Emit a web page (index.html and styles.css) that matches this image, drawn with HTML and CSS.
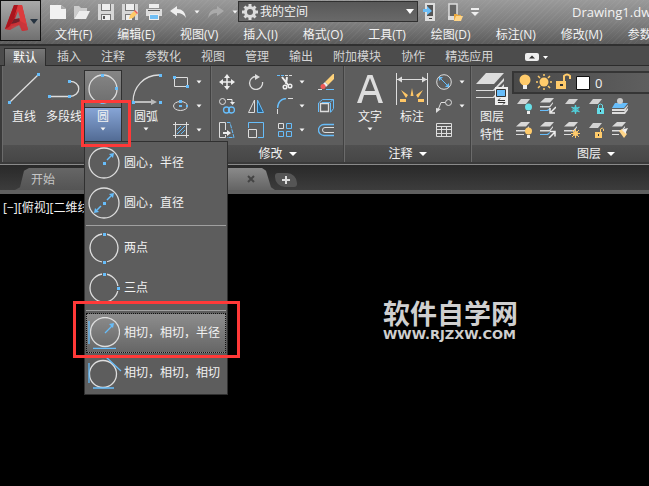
FILE: index.html
```html
<!DOCTYPE html>
<html lang="zh-CN">
<head>
<meta charset="utf-8">
<title>Drawing1.dwg</title>
<link rel="stylesheet" href="styles.css">
</head>
<body>
<svg width="0" height="0" class="defs" aria-hidden="true">
  <defs>
    <symbol id="down" viewBox="0 0 6 4"><path d="M0.5 0.5h5L3 3.5z" fill="#f4f4f4"/></symbol>
    <symbol id="sheet" viewBox="0 0 16 16"><path d="M5 1h9L10 6H1z" fill="#d2d2d2"/></symbol>
    <symbol id="sheets" viewBox="0 0 16 16"><path d="M5 0h9L10 4.500H0z" fill="#d8d8d8"/><path d="M0 8h9.500L13 4v1.500L10 9.500H0z" fill="#ddd"/></symbol>
  </defs>
</svg>

<header class="header">
  <button class="app" aria-label="应用程序菜单">
    <svg width="38" height="38" viewBox="0 0 38 38">
      <path d="M4 27 13 3h8l6 25-6 1-2-6-8 1-2 4z" fill="#d22a30"/>
      <path d="M13 3h4l-3 12-7 12-3 0z" fill="#a9151d"/>
      <path d="M17 3h4l6 25-6-3-5-16-3 7z" fill="#dc3b3c"/>
      <path d="m13 17 5-1 1 4-9 2z" fill="#75202a"/>
      <path d="m17 9 2 7-5 1z" fill="#888"/>
      <path d="m4 27 15-8 6 3 2 6-6 1-3-6-9 5z" fill="#c7363b" opacity=".85"/>
      <path d="M29 17h8l-4 5z" fill="#263340"/>
    </svg>
  </button>
  <div class="header-rows">
    <div class="quick">
      <div class="tools">
        <button aria-label="新建"><svg width="16" height="16"><path d="M0 1h11l5 4v10H0z" fill="#f1f1f1"/><path d="M11 1v4h5z" fill="#aaa"/></svg></button>
        <button aria-label="打开"><svg width="16" height="16"><path d="M0 15V2h5l2 2h6v3H5z" fill="#ccc"/><path d="M5 7h11l-4 8H0z" fill="#ededed"/></svg></button>
        <button aria-label="保存"><svg width="16" height="16"><path d="M0 0h16v16H0z" fill="#d7d7d7"/><path d="M3 0h10v7H3zM3 10h10v6H3z" fill="#777"/><path d="M4 0h8v6H4zM4 11h8v5H4z" fill="#eee"/><path d="M5 12h2v3H5z" fill="#555"/></svg></button>
        <button aria-label="另存为"><svg width="16" height="16"><path d="M0 0h16v16H0z" fill="#d7d7d7"/><path d="M3 0h10v7H3zM3 10h10v6H3z" fill="#777"/><path d="M4 0h8v6H4zM4 11h6v5H4z" fill="#eee"/><path d="m7 15 1-4 4-4 3 3-4 4z" fill="#ffca66"/><path d="m12 7 1-1 3 3-1 1z" fill="#f05b55"/></svg></button>
        <button aria-label="打印"><svg width="16" height="16"><path d="M3 0h10v4H3z" fill="#eee"/><path d="M0 5h16v7H0z" fill="#ddd"/><path d="M2 6h12v1H2z" fill="#555"/><path d="M3 10h10v6H3z" fill="#eee"/><path d="M4 11h8v4H4z" fill="#70bff5"/></svg></button>
        <button aria-label="放弃"><svg width="16" height="16"><path d="M0 7 7 2v3q8 0 9 9-3-5-9-5v3z" fill="#eee"/></svg></button>
        <button class="mini" aria-label="放弃选项"><svg width="6" height="4"><use href="#down"/></svg></button>
        <button aria-label="重做"><svg width="16" height="16"><path d="M16 7 9 2v3Q1 5 0 14q3-5 9-5v3z" fill="#aaa"/></svg></button>
        <button class="mini" aria-label="重做选项"><svg width="6" height="4"><use href="#down"/></svg></button>
      </div>
      <div class="workspace">
        <svg width="16" height="16" viewBox="-8 -8 16 16"><circle r="4.500" fill="none" stroke="#ddd" stroke-width="3"/><path d="M0-8v3M0 8V5M-8 0h3M8 0H5M-5.500-5.500l2 2M5.500 5.500l-2-2M5.500-5.500l-2 2M-5.500 5.500l2-2" stroke="#ddd" stroke-width="3"/></svg>
        <select aria-label="工作空间"><option>我的空间</option></select>
        <svg width="8" height="5" viewBox="0 0 8 5"><path d="M0 0h8L4 5z" fill="#fff"/></svg>
      </div>
      <div class="tools mobile">
        <button aria-label="保存到移动设备"><svg width="16" height="18"><path d="M3 1h8v16H3z" fill="#555" stroke="#ddd" stroke-width="2"/><path d="M2 13h10v5H2z" fill="#ddd"/><path d="M6 15h3v1H6z" fill="#444"/><path d="M0 6h4V3l5 5-5 4v-3H0z" fill="#69bdf8"/></svg></button>
        <button aria-label="从移动设备打开"><svg width="16" height="18"><path d="M2 1h8v15H2z" fill="#666" stroke="#ddd" stroke-width="1.500"/><path d="M1 13h9v4H1z" fill="#ddd"/><path d="M7 18v-7h3l1 1h3v6z" fill="#e9a83f"/><path d="M9 13h7l-2 5H7z" fill="#ffd588"/></svg></button>
        <button class="mini custom" aria-label="自定义"><svg width="8" height="8"><path d="M0 0h8v2H0zM0 4h8L4 8z" fill="#eee"/></svg></button>
      </div>
      <span class="doc-title">Drawing1.dwg</span>
    </div>
    <nav class="menubar">
      <a href="#">文件(F)</a><a href="#">编辑(E)</a><a href="#">视图(V)</a><a href="#">插入(I)</a><a href="#">格式(O)</a><a href="#">工具(T)</a><a href="#">绘图(D)</a><a href="#">标注(N)</a><a href="#">修改(M)</a><a href="#">参数(P)</a>
    </nav>
  </div>
</header>

<nav class="tabs">
  <button class="on">默认</button><button>插入</button><button>注释</button><button>参数化</button><button>视图</button><button>管理</button><button>输出</button><button>附加模块</button><button>协作</button><button>精选应用</button>
  <button class="collapse" aria-label="最小化功能区"><svg width="26" height="8"><rect width="14" height="8" rx="2" fill="#eee"/><path d="M4 5.500h6L7 2.500z" fill="#333"/><path d="M18 3h5l-2.500 3z" fill="#fff"/></svg></button>
</nav>

<main class="ribbon">
  <section class="panel">
    <div class="panel-body draw">
      <button class="big line"><svg width="32" height="32"><path d="m2 29 28-27" stroke="#ddd" stroke-width="1.300"/><path d="M0 28h3v3H0zM29 0h3v3h-3z" fill="#67bdfa"/></svg><span>直线</span></button>
      <button class="big poly"><svg width="32" height="32"><path d="M1 23.500h20M21 8.500c13-1 13 15 0 15" fill="none" stroke="#ddd" stroke-width="1.300"/><path d="M0 22h3v3H0zM20 22h3v3h-3zM20 7h3v3h-3z" fill="#67bdfa"/></svg><span>多段线</span></button>
      <div class="circle">
        <button class="circle-top" aria-label="绘制圆"><svg width="32" height="32"><circle cx="16" cy="16" r="14" fill="none" stroke="#ddd" stroke-width="1.300"/><path d="M14 1h3v3h-3zM14 28h3v3h-3zM28 14h3v3h-3z" fill="#67bdfa"/></svg></button>
        <button class="circle-more"><span>圆</span><svg width="6" height="4"><use href="#down"/></svg></button>
        <i class="mark"></i>
        <div class="menu">
          <button><svg width="32" height="32"><circle cx="16" cy="16" r="15" fill="none" stroke="#ddd" stroke-width="1.300"/><path d="M15 15h3v3h-3z" fill="#67bdfa"/><path d="m19 13 4-4" stroke="#67bdfa" stroke-width="1.500"/><path d="m21 7 5-1-1 5z" fill="#67bdfa"/></svg>圆心，半径</button>
          <button><svg width="32" height="32"><circle cx="16" cy="16" r="15" fill="none" stroke="#ddd" stroke-width="1.300"/><path d="M15 15h3v3h-3z" fill="#67bdfa"/><path d="m19 13 4-4M13 19l-4 4" stroke="#67bdfa" stroke-width="1.500"/><path d="m21 7 5-1-1 5zM7 21l-1 5 5-1z" fill="#67bdfa"/></svg>圆心，直径</button>
          <hr>
          <button><svg width="32" height="32"><circle cx="16" cy="16" r="14" fill="none" stroke="#ddd" stroke-width="1.300"/><path d="M14 0h5v4h-5zM14 28h5v4h-5z" fill="#5d5d5d"/><path d="M15 1h3v3h-3zM15 29h3v3h-3z" fill="#67bdfa"/></svg>两点</button>
          <button><svg width="32" height="32"><circle cx="16" cy="16" r="14" fill="none" stroke="#ddd" stroke-width="1.300"/><path d="M14 0h5v4h-5zM14 28h5v4h-5zM28 14h4v5h-4z" fill="#5d5d5d"/><path d="M15 1h3v3h-3zM15 29h3v3h-3zM29 15h3v3h-3z" fill="#67bdfa"/></svg>三点</button>
          <hr>
          <button class="hot"><svg width="32" height="32"><circle cx="17" cy="15" r="14.500" fill="none" stroke="#ddd" stroke-width="1.300"/><path d="M1 4v23M5 31.500h23M17 16l7-7" stroke="#67bdfa" stroke-width="1.300"/><path d="m21 7 5-1-1 5z" fill="#67bdfa"/></svg>相切，相切，半径<i class="mark"></i></button>
          <button><svg width="32" height="32" class="spill"><circle cx="15" cy="17" r="13.500" fill="none" stroke="#ddd" stroke-width="1.300"/><path d="M1 6v20M5 31h21M18 0l15 14" stroke="#67bdfa" stroke-width="1.300"/></svg>相切，相切，相切</button>
        </div>
      </div>
      <button class="big"><svg width="32" height="32"><path d="M3 29C3 14 14 2 29 2M3 29h22" fill="none" stroke="#ddd" stroke-width="1.300"/><path d="m21 26 6 3-6 3z" fill="#bbb"/><path d="M2 28h3v3H2zM29 1h3v3h-3zM29 28h3v3h-3z" fill="#67bdfa"/></svg><span>圆弧</span><svg class="arr" width="6" height="4"><use href="#down"/></svg></button>
      <div class="small two">
        <button aria-label="矩形"><svg width="16" height="16"><path d="M1.500 3.500h13v9h-13z" fill="none" stroke="#ddd"/><path d="M0 2h3v3H0zM13 11h3v3h-3z" fill="#67bdfa"/></svg></button><button class="mini" aria-label="矩形选项"><svg width="6" height="4"><use href="#down"/></svg></button>
        <button aria-label="椭圆"><svg width="16" height="16"><ellipse cx="7.500" cy="8" rx="7" ry="4.500" fill="none" stroke="#ddd"/><path d="M6 2h3v3H6zM6 7h3v2H6zM13 7h2v2h-2z" fill="#67bdfa"/></svg></button><button class="mini" aria-label="椭圆选项"><svg width="6" height="4"><use href="#down"/></svg></button>
        <button aria-label="图案填充"><svg width="16" height="16"><path d="M2.500 0v16M13.500 0v16M0 2.500h16M0 13.500h16" stroke="#ddd"/><path d="m4 8 4-4M4 12l8-8M8 12l4-4" stroke="#67bdfa"/></svg></button><button class="mini" aria-label="填充选项"><svg width="6" height="4"><use href="#down"/></svg></button>
      </div>
    </div>
    <h2 class="caption">绘图<svg width="8" height="4"><path d="M0 0h8L4 4z" fill="#fff"/></svg></h2>
  </section>

  <section class="panel">
    <div class="panel-body modify">
      <div class="small five">
        <button aria-label="移动"><svg width="16" height="16"><path d="M8 2v12M2 8h12" stroke="#eee" stroke-width="1.500"/><path d="m8 0 3 4H5zM8 16l3-4H5zM0 8l4-3v6zM16 8l-4-3v6z" fill="#eee"/></svg></button>
        <button aria-label="旋转"><svg width="16" height="16"><path d="M8 2.500A6.500 6.500 0 1 0 14.500 8" fill="none" stroke="#ddd" stroke-width="1.300"/><path d="M7 0v6l5-3z" fill="#ddd"/></svg></button>
        <button aria-label="修剪"><svg width="16" height="16"><path d="M0 1.500h7" stroke="#67bdfa" stroke-dasharray="3 1"/><path d="M8 1.500h8" stroke="#ddd" stroke-dasharray="3 1"/><path d="m5 3 6 8M10 3l-1 7" stroke="#eee" stroke-width="2"/><circle cx="8" cy="13" r="1.800" fill="none" stroke="#eee" stroke-width="1.500"/><circle cx="13" cy="12" r="1.800" fill="none" stroke="#eee" stroke-width="1.500"/></svg></button>
        <button class="mini" aria-label="修剪选项"><svg width="6" height="4"><use href="#down"/></svg></button>
        <button aria-label="删除"><svg width="16" height="16"><path d="m7 8 8-8h1v5l-6 6z" fill="#ffd27a"/><path d="m5 10 2-2 3 3-2 2z" fill="#eee"/><circle cx="5" cy="12.500" r="2.500" fill="#f15a58"/><path d="M0 15.500h4" stroke="#ddd"/><path d="M8 15.500h8" stroke="#67bdfa"/></svg></button>

        <button aria-label="复制"><svg width="16" height="16"><circle cx="3.500" cy="3.500" r="3" fill="none" stroke="#ddd"/><circle cx="7.500" cy="12" r="3" fill="none" stroke="#67bdfa" stroke-width="1.300"/><circle cx="12.500" cy="12" r="3" fill="none" stroke="#67bdfa" stroke-width="1.300"/><path d="M8 1.500h5V5" fill="none" stroke="#eee"/><path d="M11 4h5l-2.500 3z" fill="#eee"/></svg></button>
        <button aria-label="镜像"><svg width="16" height="16"><path d="M6.500 2v12.500h-6z" fill="none" stroke="#ddd"/><path d="M9.500 2v12.500h6z" fill="#27618c" stroke="#67bdfa"/></svg></button>
        <button aria-label="圆角"><svg width="16" height="16"><path d="M.5 10C1 4 4 1 9 .500" fill="none" stroke="#67bdfa" stroke-width="1.500"/><path d="M.5 11v5M11 .500h5" stroke="#ddd"/></svg></button>
        <button class="mini" aria-label="圆角选项"><svg width="6" height="4"><use href="#down"/></svg></button>
        <button aria-label="分解"><svg width="16" height="16"><path d="M2.500 5.500h8v8h-8z" fill="none" stroke="#ddd" stroke-width="1.300"/><path d="M.5 14V5l4-3.500h11v9l-3 4M4 4.500h8l3-3M12.500 5v9" fill="none" stroke="#67bdfa"/></svg></button>

        <button aria-label="拉伸"><svg width="16" height="16"><path d="M6.500 8V.500h-6v15h6V13" fill="none" stroke="#ddd"/><path d="M8 .500h3l4 15H8" fill="none" stroke="#67bdfa" stroke-dasharray="4 1"/><path d="M4 10h4V8l4 3-4 3v-2H4z" fill="#eee"/></svg></button>
        <button aria-label="缩放"><svg width="16" height="16"><path d="M.5 6V.500h15v15H10" fill="none" stroke="#67bdfa"/><path d="M.5 7.500h8v8h-8z" fill="none" stroke="#ddd"/></svg></button>
        <button aria-label="阵列"><svg width="16" height="16"><path d="M1.500 1.500h5v5h-5z" fill="none" stroke="#ddd"/><path d="M9.500 1.500h5v5h-5zM1.500 9.500h5v5h-5zM9.500 9.500h5v5h-5z" fill="none" stroke="#67bdfa"/></svg></button>
        <button class="mini" aria-label="阵列选项"><svg width="6" height="4"><use href="#down"/></svg></button>
        <button aria-label="偏移"><svg width="16" height="16"><path d="M16 2.500H6a5.500 5.500 0 0 0 0 11h10" fill="none" stroke="#67bdfa" stroke-width="1.300"/><path d="M16 5.500H7a2.500 2.500 0 0 0 0 5h9" fill="none" stroke="#ddd"/></svg></button>
      </div>
    </div>
    <h2 class="caption">修改<svg width="8" height="4"><path d="M0 0h8L4 4z" fill="#fff"/></svg></h2>
  </section>

  <section class="panel">
    <div class="panel-body annotate">
      <button class="big"><svg width="32" height="32"><path d="m3 30 10.500-28h5l10.500 28h-4.500l-2.500-8H10l-2.500 8zM11 18h10L16 5z" fill="#ddd" fill-rule="evenodd"/></svg><span>文字</span><svg class="arr" width="6" height="4"><use href="#down"/></svg></button>
      <button class="big"><svg width="32" height="32"><path d="M.500 0v32M31.500 0v32M1 6.500h30" stroke="#ddd"/><path d="m1 6.500 5-3v6zM31 6.500l-5-3v6z" fill="#ddd"/><path d="m16 15 1.500 8h-3zM5 17l7 5-2 3zM27 17l-7 5 2 3zM4 26l6 0v3H4zM28 26l-6 0v3h6z" fill="#ffc766"/></svg><span>标注</span></button>
      <div class="small two">
        <button aria-label="直径"><svg width="16" height="16"><circle cx="8" cy="8" r="7.300" fill="none" stroke="#ddd"/><path d="m4 4 8 8" stroke="#67bdfa"/><path d="M3 3h4L3 7zM13 13H9l4-4z" fill="#67bdfa"/></svg></button><button class="mini" aria-label="直径选项"><svg width="6" height="4"><use href="#down"/></svg></button>
        <button aria-label="引线"><svg width="16" height="16"><circle cx="12.500" cy="4.500" r="3" fill="none" stroke="#ddd"/><path d="M9 4.500H5L2 12" fill="none" stroke="#ddd"/><path d="m0 10 5 1-5 4z" fill="#ddd"/></svg></button><button class="mini" aria-label="引线选项"><svg width="6" height="4"><use href="#down"/></svg></button>
        <button aria-label="表格"><svg width="16" height="16"><path d="M.5 1.500h15v13H.500zM1 4.500h14M1 7.500h14M1 11.500h14M5.500 5v9M10.500 5v9" fill="none" stroke="#ddd"/></svg></button>
      </div>
    </div>
    <h2 class="caption">注释<svg width="8" height="4"><path d="M0 0h8L4 4z" fill="#fff"/></svg></h2>
  </section>

  <section class="panel wide">
    <div class="panel-body layers">
      <button class="big"><svg width="32" height="32"><path d="M10 0h18L18 11H0z" fill="#ddd"/><path d="M0 17h17L28 5v3L18 18H0zM0 24h17L28 11v4L18 25H0z" fill="#ddd"/><path d="M19 14h13v18H19z" fill="#eee"/><path d="M20.500 16.500h9v7h-9z" fill="#67bdfa" stroke="#333"/><path d="M22 27.500h7M22 27.500l2-2M22 29.500h7M29 29.500l-2 2" stroke="#333"/></svg><span>图层<br>特性</span></button>
      <div class="layer-side">
        <label class="layer">
          <svg width="72" height="20">
            <circle cx="7" cy="7" r="5.500" fill="#ffcb6b"/><path d="M5 12h4v4H5z" fill="#eee"/>
            <circle cx="26" cy="9" r="4.500" fill="#ffcb6b"/><path d="M26 1v2M26 15v2M18 9h2M32 9h2M20 3l2 2M30 13l2 2M32 3l-2 2M22 13l-2 2" stroke="#ffcb6b" stroke-width="1.500"/>
            <path d="M38 8h10v8H38z" fill="#ffcb6b"/><path d="M46 8V3q3-3 6 0v3" fill="none" stroke="#ffcb6b" stroke-width="2"/><path d="M42 11h3v2h-3z" fill="#333"/>
            <path d="M58.500 3.500h13v13h-13z" fill="#fff" stroke="#111"/>
          </svg>
          <select aria-label="图层"><option>0</option></select>
        </label>
        <div class="layer-tools">
          <button aria-label="关闭图层"><svg width="16" height="16"><use href="#sheet"/><circle cx="12.500" cy="9" r="3.500" fill="#69e0e8"/><path d="M11 13h3v3h-3z" fill="#eee"/></svg></button>
          <button aria-label="隔离"><svg width="16" height="16"><use href="#sheets"/><path d="M0 12h7l3-2v1l-2 2H0z" fill="#67bdfa"/><path d="m16 9-5 5M10 10v5h5" fill="none" stroke="#eee" stroke-width="1.500"/></svg></button>
          <button aria-label="冻结"><svg width="16" height="16"><use href="#sheet"/><path d="M11.500 7v9M7.500 9l8 5M15.500 9l-8 5" stroke="#51cfda" stroke-width="1.300"/><circle cx="11.500" cy="11.500" r="2.500" fill="none" stroke="#51cfda"/></svg></button>
          <button aria-label="锁定"><svg width="16" height="16"><use href="#sheet"/><path d="M9 10h7v6H9z" fill="#66dce7"/><path d="M10.500 10V7q2-2 4 0v3" fill="none" stroke="#66dce7"/><path d="M12 12h1v2h-1z" fill="#333"/></svg></button>
          <button aria-label="置为当前"><svg width="16" height="16"><path d="M3 5h13l-4 5H0z" fill="#67bdfa"/><circle cx="8" cy="3" r="3" fill="#ccc"/><path d="M0 11h12l4-4v1l-3 5H0zM0 14h12l4-4v2l-3 4H0z" fill="#ddd"/></svg></button>
          <button aria-label="打开图层"><svg width="16" height="16"><use href="#sheets"/><path d="M0 12h8v1H0z" fill="#ddd"/><circle cx="12.500" cy="9" r="3.500" fill="#ffcb6b"/><path d="M11 13h3v3h-3z" fill="#eee"/></svg></button>
          <button aria-label="取消隔离"><svg width="16" height="16"><use href="#sheets"/><path d="M0 12h7l3-2v1l-2 2H0z" fill="#67bdfa"/><path d="m9 16 6-6M10 9.500h5v5" fill="none" stroke="#eee" stroke-width="1.500"/></svg></button>
          <button aria-label="解冻"><svg width="16" height="16"><use href="#sheets"/><path d="M0 12h7v1H0z" fill="#ddd"/><circle cx="11.500" cy="11.500" r="2.500" fill="#ffcb6b"/><path d="M11.500 7v9M7 11.500h9M8 8l7 7M15 8l-7 7" stroke="#ffcb6b"/></svg></button>
          <button aria-label="解锁"><svg width="16" height="16"><use href="#sheet"/><path d="M7 10h7v6H7z" fill="#ffcb6b"/><path d="M12.500 10V7q2-2 3 0v2" fill="none" stroke="#ffcb6b"/><path d="M10 12h1v2h-1z" fill="#333"/></svg></button>
          <button aria-label="匹配图层"><svg width="16" height="16"><use href="#sheets"/><path d="M0 12h7v1H0z" fill="#ddd"/><path d="m7 9 3-2 5 5-3 4z" fill="#ffd588"/><path d="m10 8 2-1 4-1-2 4v2z" fill="#eee"/></svg></button>
        </div>
      </div>
    </div>
    <h2 class="caption">图层<svg width="8" height="4"><path d="M0 0h8L4 4z" fill="#fff"/></svg></h2>
  </section>
</main>

<nav class="docs">
  <button class="doc">开始</button>
  <button class="doc current" aria-label="Drawing1"><svg width="8" height="8"><path d="m1 1 6 6M7 1 1 7" stroke="#444" stroke-width="2"/></svg></button>
  <button class="plus" aria-label="新图形"><svg width="8" height="8"><path d="M4 0v8M0 4h8" stroke="#ddd" stroke-width="2"/></svg></button>
</nav>

<section class="canvas">
  <p class="view">[−][俯视][二维线框]</p>
  <div class="watermark"><strong>软件自学网</strong><span>WWW.RJZXW.COM</span></div>
</section>
</body>
</html>
```

FILE: styles.css
```css
* { box-sizing: border-box; }
html, body { height: 100%; }
body {
  margin: 0;
  display: flex;
  flex-direction: column;
  overflow: hidden;
  background: #000;
  color: #f2f2f2;
  font: 12px/18px "Open Sans", "Noto Sans CJK SC", sans-serif;
  white-space: nowrap;
}
.defs { position: absolute; }
svg { display: block; flex: none; }
button {
  border: 0;
  padding: 0;
  margin: 0;
  background: none;
  color: inherit;
  font: inherit;
  flex: none;
}
select {
  appearance: none;
  border: 0;
  padding: 0;
  background: none;
  color: inherit;
  font: inherit;
  flex: 1;
  min-width: 0;
}
a { color: inherit; text-decoration: none; }

.header {
  display: flex;
  flex: none;
  height: 46px;
  border-bottom: 2px solid #303030;
  background:
    repeating-linear-gradient(135deg, transparent 0 3px, rgba(255, 255, 255, .04) 3px 4px),
    linear-gradient(#9a9a9a, #808080 50%, #5c5c5c);
}
.app {
  width: 41px;
  height: 41px;
  border: 1px solid #111;
  background: linear-gradient(#aaa, #707070);
}
.header-rows { flex: 1; min-width: 0; }
.quick { display: flex; align-items: center; height: 23px; padding-left: 9px; }
.tools { display: flex; align-items: center; flex: none; gap: 8px; width: 188px; }
.mini { width: 6px; }
.tools.mobile { width: auto; margin-left: 5px; }
.tools .custom { width: 8px; }
.workspace {
  display: flex;
  align-items: center;
  gap: 2px;
  flex: none;
  width: 180px;
  height: 21px;
  padding: 0 3px;
  border: 1px solid #303030;
  background: linear-gradient(#585858, #696969);
}
.doc-title { margin-left: 93px; font-size: 13px; }
.menubar { display: flex; gap: 25px; padding: 3px 0 0 14px; }

.tabs {
  display: flex;
  flex: none;
  height: 20px;
  padding: 2px 0 0 3px;
  border-bottom: 1px solid #2c2c2c;
  background: #4c4c4c;
  color: #d5d5d5;
}
.tabs button { padding: 0 10px; }
.tabs .on {
  height: 18px;
  margin: 0 1px;
  padding: 0 8px;
  border: 1px solid #2c2c2c;
  border-bottom: 0;
  background: linear-gradient(#777, #5d5d5d);
  color: #fff;
}
.tabs .collapse { padding: 0 22px; }

.ribbon {
  display: flex;
  flex: none;
  height: 99px;
  padding-left: 2px;
  border-bottom: 1px solid #8a8a8a;
  background: #3a3a3a;
}
.panel {
  display: flex;
  flex-direction: column;
  flex: none;
  height: 96px;
  border-right: 1px solid #414141;
  border-left: 1px solid #6b6b6b;
  background: #5d5d5d;
}
.wide { min-width: 250px; }
.panel-body { display: flex; flex: 1; padding: 4px 2px 0; }
.panel-body.draw { padding-left: 3px; }
.caption {
  display: flex;
  align-items: center;
  justify-content: center;
  gap: 6px;
  height: 17px;
  margin: 0;
  background: linear-gradient(#505050, #464646);
  font-size: 12px;
  font-weight: normal;
}
.big {
  display: flex;
  flex-direction: column;
  align-items: center;
  width: 40px;
  padding-top: 3px;
}
.big span { margin-top: 3px; }
.arr { margin-top: 1px; }
.line { width: 36px; }
.poly { margin-left: 2px; }
.circle { position: relative; width: 38px; height: 72px; margin-right: 4px; border: 1px solid #303030; }
.circle-top {
  display: flex;
  justify-content: center;
  align-items: center;
  width: 100%;
  height: 37px;
  border-bottom: 1px solid #303030;
  background: linear-gradient(#868686, #6c6c6c);
}
.circle-more {
  display: flex;
  flex-direction: column;
  align-items: center;
  gap: 1px;
  width: 100%;
  height: 33px;
  background: linear-gradient(#87a5d6, #526b94);
}
.mark { position: absolute; z-index: 3; border: 3px solid #ff3938; pointer-events: none; }
.circle > .mark { inset: 29px -10px -6px -4px; }
.small { display: grid; grid-auto-rows: 24px; align-items: center; align-content: start; }
.two { grid-template-columns: 16px 6px; column-gap: 7px; margin-left: 7px; margin-right: 6px; }
.panel-body.modify { padding-left: 7px; }
.five { grid-template-columns: 29px 29px 22px 19px 16px; justify-items: start; margin-right: 7px; }
.panel-body.annotate { padding-left: 4px; }
.annotate .big { width: 42px; }
.annotate .two { margin: 0 3px; }
.panel-body.layers { padding-left: 0; }
.layer-side { flex: 1; }
.layer {
  display: flex;
  gap: 5px;
  height: 23px;
  margin-top: 1px;
  padding: 0 4px;
  border: 2px solid #353535;
  border-right: 0;
  background: linear-gradient(90deg, #4a4a4a, #696969);
  font-size: 13px;
}
.layer-tools {
  display: grid;
  grid-template-columns: repeat(5, 16px);
  grid-auto-rows: 24px;
  column-gap: 8px;
  align-items: center;
  padding-left: 4px;
}

.menu {
  position: absolute;
  z-index: 2;
  top: 70px;
  left: -1px;
  width: 144px;
  padding: 1px;
  border: 1px solid #303030;
  background: #5d5d5d;
}
.menu button {
  position: relative;
  display: flex;
  align-items: center;
  gap: 4px;
  width: 100%;
  height: 40px;
  padding-left: 2px;
}
.menu hr { height: 1px; margin: 2px 0; border: 0; background: #a0a0a0; }
.menu .hot { border: 1px dotted #111; background: linear-gradient(#8d8d8d, #666); padding-left: 1px; }
.hot .mark { inset: -13px -15px -6px -14px; }
.spill { overflow: visible; }

.docs {
  display: flex;
  align-items: flex-end;
  flex: none;
  height: 29px;
  padding-left: 15px;
  border-bottom: 4px solid #5f5f5f;
  background: linear-gradient(#292929, #3c3c3c);
}
.doc {
  width: 130px;
  height: 22px;
  padding: 2px 0 0 16px;
  background: linear-gradient(#666, #545454);
  clip-path: polygon(0 100%, 5px 88%, 9px 12%, 14px 0, calc(100% - 13px) 0, calc(100% - 9px) 12%, calc(100% - 4px) 88%, 100% 100%);
  color: #c6c6c6;
  text-align: left;
}
.current {
  display: flex;
  justify-content: flex-end;
  align-items: center;
  padding: 0 20px 0 0;
  background: linear-gradient(#8a8a8a, #646464);
}
.plus {
  display: flex;
  align-items: center;
  justify-content: center;
  width: 22px;
  height: 14px;
  margin-bottom: 3px;
  border-radius: 3px 10px 3px 10px;
  background: #555;
}
.canvas { position: relative; flex: 1; }
.view { margin: 5px 3px; }
.watermark {
  position: absolute;
  top: 105px;
  left: 383px;
  display: flex;
  flex-direction: column;
  color: #cfcfcf;
}
.watermark strong { font: bold 27px/28px "Noto Sans CJK SC", sans-serif; }
.watermark span { font: bold 13px/16px "DejaVu Sans", sans-serif; }
```
